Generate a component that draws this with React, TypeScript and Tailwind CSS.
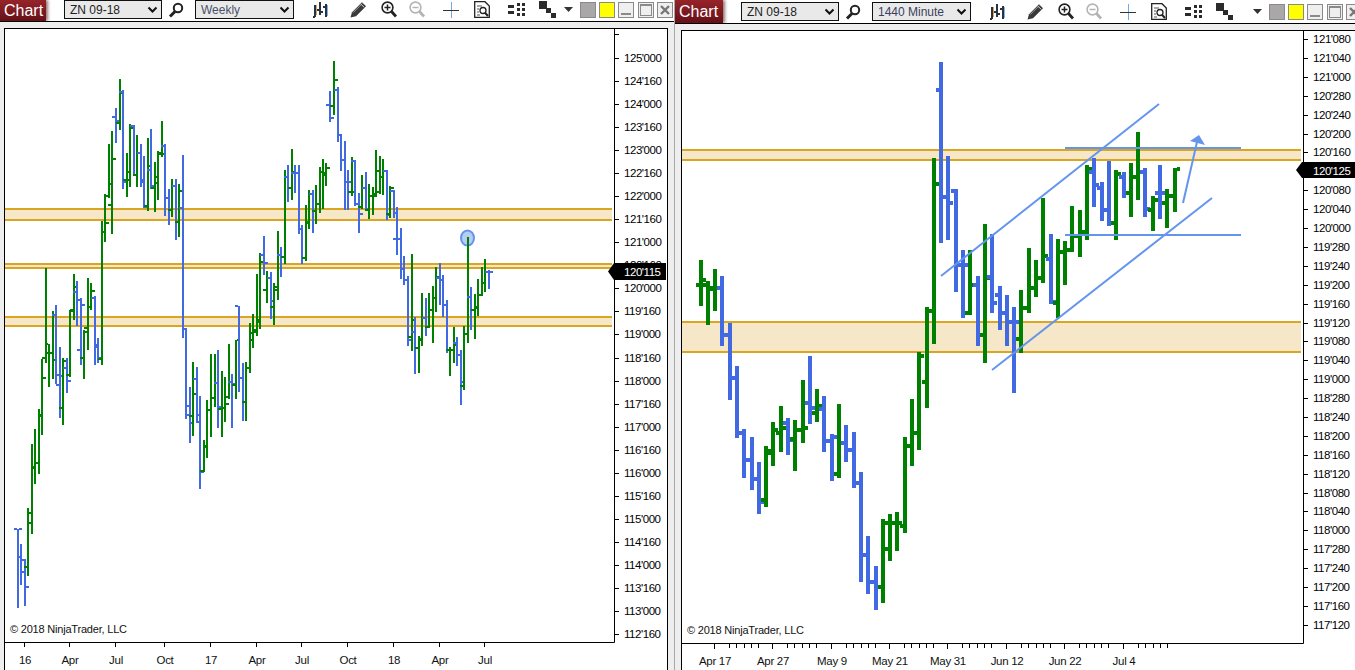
import React from "react"

type Bar = [string, number, number, number, number, number]

const GREEN = "#008000"
const BLUE = "#4169e1"
const GOLD = "#daa520"
const BAND = "#f6e7c9"
const LINE = "#6495ed"

// color, x, high, low, open (left tick), close (right tick)
const weekly: Bar[] = [
  ["b",18,529,608,529,529],["b",21,544,585,557,560],["b",25,559,606,572,587],["g",28,508,576,567,513],
  ["g",32,444,534,523,467],["g",35,429,484,468,463],["g",39,409,474,463,415],["g",42,359,435,416,378],
  ["g",46,268,363,358,353],["g",49,344,387,344,353],["g",53,311,379,353,360],["b",56,305,384,315,375],
  ["b",60,347,418,385,376],["g",63,358,425,408,361],["b",67,358,393,368,381],["g",70,310,377,375,311],
  ["g",74,274,320,310,287],["b",77,281,326,292,300],["b",81,298,365,350,305],["g",84,330,379,358,332],
  ["g",88,278,350,328,307],["g",91,283,310,307,291],["b",95,296,365,298,347],["b",98,338,363,345,358],
  ["g",102,221,365,359,232],["g",105,194,242,232,223],["g",109,144,198,196,184],["g",112,131,234,205,159],
  ["b",116,108,143,117,121],["g",120,79,130,123,93],["b",123,90,189,92,182],["g",127,153,197,180,172],
  ["g",130,124,187,180,128],["b",134,125,176,126,175],["g",137,135,187,175,153],["b",141,144,187,153,180],
  ["b",144,156,208,182,207],["g",148,138,211,206,166],["b",151,129,189,170,186],["g",155,162,212,188,177],
  ["g",158,151,200,183,153],["g",162,121,157,154,154],["b",165,144,216,146,198],["b",169,189,225,198,210],
  ["g",172,179,217,210,186],["b",176,179,240,186,222],["g",179,184,237,222,191],["b",183,155,338,208,329],
  ["b",186,329,419,329,415],["b",190,387,443,406,423],["g",193,362,436,416,394],["b",197,367,422,379,415],
  ["b",200,396,489,422,472],["g",204,440,472,471,446],["g",207,400,458,447,410],["g",211,354,437,410,398],
  ["g",215,354,407,398,383],["b",218,350,428,383,407],["g",222,371,437,409,408],["g",225,377,422,408,404],
  ["g",229,344,399,397,382],["b",232,374,428,382,384],["g",236,340,399,385,340],["b",239,306,392,306,378],
  ["b",243,363,421,378,402],["g",246,362,421,402,368],["g",250,323,373,368,333],["g",253,314,348,340,330],
  ["g",257,274,336,332,320],["g",260,253,329,322,262],["b",264,236,275,255,263],["g",267,271,303,290,278],
  ["b",271,272,319,278,301],["g",274,283,325,307,290],["g",278,231,300,287,255],["b",281,247,277,255,257],
  ["g",285,170,264,257,177],["b",288,165,202,177,188],["g",292,149,200,188,172],["b",295,165,193,173,173],
  ["b",299,165,234,173,229],["b",302,225,264,229,258],["g",306,205,261,258,222],["g",309,190,229,223,194],
  ["b",313,190,233,194,211],["g",316,185,224,211,204],["g",320,167,213,204,172],["g",323,159,209,172,173],
  ["g",326,163,186,175,168],["b",330,91,122,105,118],["g",334,61,115,106,80],["b",338,87,142,90,135],
  ["b",341,135,171,135,160],["b",345,141,210,160,182],["b",348,170,210,182,182],["g",352,157,196,192,192],
  ["b",355,160,206,161,204],["b",359,193,233,204,214],["g",362,175,209,207,188],["b",366,172,211,188,209],
  ["g",369,184,219,210,196],["g",373,187,215,196,196],["g",376,150,195,194,171],["g",380,156,194,192,177],
  ["g",383,159,195,177,171],["b",387,170,220,171,215],["g",390,186,218,214,188],["b",394,190,218,191,213],
  ["b",397,207,255,239,239],["b",401,228,279,239,269],["b",404,256,285,269,280],["b",408,276,346,280,340],
  ["g",412,254,351,337,320],["b",415,317,374,332,348],["g",419,336,373,348,339],["g",422,293,346,340,318],
  ["b",426,298,336,318,327],["g",429,293,328,327,310],["g",433,286,343,310,298],["g",436,267,312,298,277],
  ["b",440,263,305,278,280],["b",443,275,317,280,305],["b",447,300,353,305,350],["g",450,347,376,350,350],
  ["g",454,327,363,350,345],["b",457,337,366,343,355],["b",461,350,405,355,382],["g",464,326,390,386,334],
  ["g",468,237,343,334,297],["b",471,287,330,297,310],["g",475,294,339,310,308],["g",478,279,316,307,295],
  ["g",482,267,296,295,283],["g",485,259,292,283,272],["b",489,270,289,272,272],
]

const minute: Bar[] = [
  ["g",701,260,306,285,280],["g",708,281,325,285,288],["g",715,269,311,289,288],["b",722,276,346,288,335],
  ["b",730,323,400,335,378],["b",737,366,438,378,433],["b",744,429,478,433,460],["b",752,437,490,460,479],
  ["b",759,462,514,479,502],["g",766,446,507,500,451],["g",773,422,466,453,430],["g",781,406,452,433,428],
  ["b",788,418,455,423,440],["g",795,420,471,439,430],["g",803,380,443,430,428],["b",810,356,424,403,408],
  ["g",817,389,422,413,406],["b",824,396,452,409,441],["b",832,434,481,441,437],["g",839,404,478,474,443],
  ["b",846,425,462,443,450],["b",854,432,488,450,483],["b",861,472,582,483,555],["b",868,536,594,555,582],
  ["b",876,566,610,582,587],["g",883,519,603,587,523],["g",890,514,561,549,523],["g",897,512,551,523,523],
  ["g",905,437,533,526,446],["g",912,399,466,446,433],["g",919,352,450,433,356],["g",927,307,408,382,311],
  ["g",934,158,344,311,184],["b",941,62,243,90,197],["b",948,156,240,197,203],["b",956,189,292,191,265],
  ["b",963,250,318,265,265],["g",970,250,315,313,285],["b",978,276,346,285,335],["g",985,224,363,335,278],
  ["b",992,234,313,277,303],["b",1000,286,330,295,313],["b",1007,295,346,313,322],["b",1014,307,393,322,322],
  ["g",1021,290,353,339,308],["g",1029,248,313,308,288],["g",1036,260,297,288,278],["g",1043,198,283,278,256],
  ["b",1051,234,304,259,302],["g",1058,239,318,303,252],["g",1065,241,285,252,250],["g",1072,206,252,250,236],
  ["g",1080,210,257,236,232],["g",1087,165,240,232,169],["b",1094,158,207,172,185],["b",1102,182,221,188,210],
  ["b",1109,161,226,210,223],["g",1116,170,240,223,174],["b",1124,172,198,177,193],["g",1131,163,217,193,177],
  ["g",1138,132,200,177,172],["b",1145,168,217,172,209],["g",1153,196,231,210,200],["b",1160,165,219,193,193],
  ["g",1167,189,228,203,196],["g",1175,168,212,196,169],
]

const weeklyPrices = ["125'000","124'160","124'000","123'160","123'000","122'160","122'000","121'160","121'000","120'160","120'000","119'160","119'000","118'160","118'000","117'160","117'000","116'160","116'000","115'160","115'000","114'160","114'000","113'160","113'000","112'160"]
const minutePrices = ["121'080","121'040","121'000","120'280","120'240","120'200","120'160","120'120","120'080","120'040","120'000","119'280","119'240","119'200","119'160","119'120","119'080","119'040","119'000","118'280","118'240","118'200","118'160","118'120","118'080","118'040","118'000","117'280","117'240","117'200","117'160","117'120"]

const weeklyDates: [string, number, number][] = [["16",25,24],["Apr",70,69],["Jul",116,115],["Oct",165,164],["17",211,210],["Apr",257,256],["Jul",302,301],["Oct",348,347],["18",394,393],["Apr",440,439],["Jul",485,484]]
const minuteDates: [string, number, number][] = [["Apr 17",715,714],["Apr 27",773,772],["May 9",832,831],["May 21",890,889],["May 31",948,947],["Jun 12",1007,1006],["Jun 22",1065,1064],["Jul 4",1124,1123]]
const minorOffsets = [15, 22, 30, 37, 44]

function Bars({ data, w, tick }: { data: Bar[]; w: number; tick: number }) {
  return (
    <>
      {data.map(([c, x, hi, lo, open, close], i) => {
        const fill = c === "g" ? GREEN : BLUE
        const left = x - w / 2
        return (
          <g key={i} fill={fill}>
            <rect x={left} y={hi} width={w} height={lo - hi} />
            <rect x={left - tick} y={open - w / 2} width={tick} height={w} />
            <rect x={left + w} y={close - w / 2} width={tick} height={w} />
          </g>
        )
      })}
    </>
  )
}

function Zone({ x1, x2, top, bottom }: { x1: number; x2: number; top: number; bottom: number }) {
  return (
    <>
      <rect x={x1} y={top} width={x2 - x1} height={bottom - top} fill={BAND} />
      <rect x={x1} y={top - 1} width={x2 - x1} height={2} fill={GOLD} />
      <rect x={x1} y={bottom - 1} width={x2 - x1} height={2} fill={GOLD} />
    </>
  )
}

function WeeklyChart() {
  return (
    <svg width={662} height={641} viewBox="5 29 662 641" className="block">
      <Zone x1={5} x2={612} top={209} bottom={220} />
      <Zone x1={5} x2={612} top={264} bottom={268} />
      <Zone x1={5} x2={612} top={317} bottom={326} />
      <ellipse cx={467.5} cy={238} rx={6.5} ry={7.5} fill="#b7cdf3" stroke={LINE} strokeWidth={2} />
      <Bars data={weekly} w={2} tick={3} />
      <path d="M614.5 28V642.5H5" fill="none" stroke="#000" />
      <path d="M614 34.5h5" stroke="#000" />
      {weeklyPrices.map((p, i) => {
        const y = 58 + i * 23.04
        return (
          <g key={p}>
            <path d={`M614 ${Math.round(y) + 0.5}h5`} stroke="#000" />
            <text x={624} y={Math.round(y) + 4} fill="#000" className="text-[11.5px] tracking-[-0.45px]">{p}</text>
          </g>
        )
      })}
      <polygon points="608,271.5 614,263 666,263 666,280 614,280" fill="#000" />
      <text x={624} y={276} fill="#fff" className="text-[11.5px] tracking-[-0.45px]">120'115</text>
      <text x={10} y={633} fill="#111" className="text-[11px] tracking-[-0.2px]">© 2018 NinjaTrader, LLC</text>
      {weeklyDates.map(([label, x, t]) => (
        <g key={label + x}>
          <path d={`M${t + 0.5} 642v5`} stroke="#000" />
          <text x={x} y={664} textAnchor="middle" fill="#111" className="text-[11.5px] tracking-[-0.3px]">{label}</text>
        </g>
      ))}
    </svg>
  )
}

function MinuteChart() {
  return (
    <svg width={673} height={639} viewBox="682 31 673 639" className="block">
      <Zone x1={682} x2={1301} top={150} bottom={160} />
      <Zone x1={682} x2={1301} top={322} bottom={352} />
      <Bars data={minute} w={4} tick={3} />
      <g stroke={LINE} fill="none" strokeWidth={2}>
        <path d="M941 276L1159 104" />
        <path d="M992 370L1212 198" />
        <path d="M1065 148H1241" />
        <path d="M1065 235H1241" />
        <path d="M1183 203L1197 142" />
      </g>
      <polygon points="1190,141 1199,135 1205,145" fill={LINE} />
      <path d="M1303.5 30V643.5H682" fill="none" stroke="#000" />
      {minutePrices.map((p, i) => {
        const y = Math.round(39 + i * 18.9)
        return (
          <g key={p}>
            <path d={`M1303 ${y + 0.5}h5`} stroke="#000" />
            <text x={1313} y={y + 4} fill="#000" className="text-[11.5px] tracking-[-0.45px]">{p}</text>
          </g>
        )
      })}
      <polygon points="1296,170 1302,162 1355,162 1355,178 1302,178" fill="#000" />
      <text x={1313} y={175} fill="#fff" className="text-[11.5px] tracking-[-0.45px]">120'125</text>
      <text x={687} y={634} fill="#111" className="text-[11px] tracking-[-0.2px]">© 2018 NinjaTrader, LLC</text>
      {minuteDates.map(([label, x, t]) => (
        <g key={label}>
          <path d={`M${t + 0.5} 643v6`} stroke="#000" />
          {minorOffsets.map((o) => (
            <path key={o} d={`M${t + o + 0.5} 643v5`} stroke="#000" />
          ))}
          <text x={x} y={665} textAnchor="middle" fill="#111" className="text-[11.5px] tracking-[-0.3px]">{label}</text>
        </g>
      ))}
    </svg>
  )
}

function Select({ label, textClass, w }: { label: string; textClass: string; w: string }) {
  return (
    <div className={`flex h-[19px] items-center justify-between border border-[#111] bg-[#e9e9e9] pl-[5px] pr-[3px] text-[12px] ${textClass} ${w}`}>
      <span>{label}</span>
      <svg width={11} height={8} viewBox="0 0 11 8">
        <path d="M1.5 1.5L5.5 5.5L9.5 1.5" fill="none" stroke="#111" strokeWidth={2} />
      </svg>
    </div>
  )
}

function SearchIcon() {
  return (
    <svg width={16} height={16} viewBox="0 0 16 16" className="ml-[6px]">
      <circle cx={10} cy={6} r={4.2} fill="none" stroke="#222" strokeWidth={2} />
      <path d="M7 9.5L2 14.5" stroke="#222" strokeWidth={3} />
    </svg>
  )
}

function BarsIcon() {
  return (
    <svg width={15} height={16} viewBox="0 0 15 16" className="ml-[19px]">
      <g fill="#2a3340">
        <rect x={1} y={3} width={2} height={12} />
        <rect x={0} y={14} width={2} height={2} />
        <rect x={6} y={0} width={2} height={13} />
        <rect x={4} y={7} width={2} height={2} />
        <rect x={8} y={9} width={2} height={2} />
        <rect x={12} y={2} width={2} height={13} />
        <rect x={10} y={4} width={2} height={2} />
      </g>
      <path d="M3.5 3v10" stroke="#d9a060" />
      <path d="M14.5 3v11" stroke="#7fb2e6" />
    </svg>
  )
}

function PencilIcon() {
  return (
    <svg width={17} height={17} viewBox="0 0 17 17" className="ml-[22px]">
      <path d="M0.5 16.5L2 11.2L12 1.2L16 5.2L6 15.2Z" fill="#3a3a3a" />
      <path d="M3.2 11.6L12.2 2.6" stroke="#9a9a9a" />
      <path d="M11 3.2L14.2 6.4" stroke="#ddd" />
    </svg>
  )
}

function ZoomIcon({ plus, color, ml }: { plus: boolean; color: string; ml: string }) {
  return (
    <svg width={16} height={17} viewBox="0 0 16 17" className={ml}>
      <circle cx={6.5} cy={6.5} r={5.4} fill="none" stroke={color} strokeWidth={1.6} />
      <path d={plus ? "M3.5 6.5h6M6.5 3.5v6" : "M3.5 6.5h6"} stroke={color} strokeWidth={1.5} />
      <path d="M10.5 10.5L15 15.5" stroke={color} strokeWidth={2.8} />
    </svg>
  )
}

function CrossIcon() {
  return (
    <svg width={16} height={16} viewBox="0 0 16 16" className="ml-[18px]">
      <path d="M8.5 0v16" stroke="#74a9e0" />
      <path d="M0 8.5h16" stroke="#333" />
    </svg>
  )
}

function DocIcon() {
  return (
    <svg width={16} height={17} viewBox="0 0 16 17" className="ml-[15px]">
      <path d="M0.7 0.7H11L15.3 5V16.3H0.7Z" fill="#fff" stroke="#222" strokeWidth={1.3} />
      <path d="M3 5h5M3 8h2M3 11h2M3 14h3" stroke="#555" />
      <circle cx={9} cy={9.5} r={3} fill="#fff" stroke="#222" strokeWidth={1.3} />
      <path d="M11 11.8L14 15" stroke="#222" strokeWidth={2} />
    </svg>
  )
}

function DashIcon() {
  return (
    <svg width={17} height={15} viewBox="0 0 17 15" className="ml-[18px]" fill="#2b2b2b">
      <rect x={0} y={3} width={6} height={3} />
      <rect x={0} y={9} width={6} height={3} />
      <rect x={9} y={1} width={3} height={3} />
      <rect x={9} y={6} width={3} height={3} />
      <rect x={9} y={11} width={3} height={3} />
      <rect x={14} y={1} width={3} height={3} />
      <rect x={14} y={6} width={3} height={3} />
      <rect x={14} y={11} width={3} height={3} />
    </svg>
  )
}

function StackIcon() {
  return (
    <svg width={17} height={17} viewBox="0 0 17 17" className="ml-[14px]" fill="#2b2b2b">
      <rect x={0} y={0} width={8} height={8} />
      <rect x={7} y={7} width={5} height={5} />
      <rect x={12} y={12} width={5} height={5} />
    </svg>
  )
}

function CaptionButtons() {
  return (
    <>
      <div className="ml-[7px] h-[16px] w-[16px] border border-[#8a8a8a] bg-[#a9a7a7]" />
      <div className="ml-[3px] h-[16px] w-[16px] border border-[#8a8a8a] bg-[#ffff00]" />
      <div className="ml-[3px] flex h-[16px] w-[16px] items-end justify-center border border-[#8a8a8a] bg-[#efefef] pb-[2px]">
        <div className="h-[2px] w-[10px] bg-[#8a8a8a]" />
      </div>
      <div className="ml-[4px] h-[16px] w-[16px] border border-[#8a8a8a] bg-[#efefef] p-[1px]">
        <div className="h-full border border-t-[2px] border-[#8a8a8a]" />
      </div>
      <div className="ml-[3px] flex h-[16px] w-[16px] shrink-0 items-center justify-center border border-[#8a8a8a] bg-[#efefef]">
        <svg width={10} height={10} viewBox="0 0 10 10">
          <path d="M1 1L9 9M9 1L1 9" stroke="#777" strokeWidth={2.4} />
        </svg>
      </div>
    </>
  )
}

function Toolbar({ period, periodClass, buttonW, rowTop, menuGap, height }: { period: string; periodClass: string; buttonW: string; rowTop: string; menuGap: string; height: string }) {
  return (
    <div className={`flex shrink-0 items-start overflow-hidden border-b border-black bg-white ${height}`}>
      <div className={`flex h-full shrink-0 items-center bg-gradient-to-b from-[#96242a] to-[#661018] pl-[4px] text-[16px] text-white shadow-[2px_0_3px_rgba(60,0,0,0.55)] ${buttonW}`}>
        Chart
      </div>
      <div className={`flex h-[19px] shrink-0 items-center ${rowTop}`}>
        <div className="ml-[18px]">
          <Select label="ZN 09-18" textClass="text-[#222]" w="w-[98px]" />
        </div>
        <SearchIcon />
        <div className="ml-[11px]">
          <Select label={period} textClass={periodClass} w="w-[99px]" />
        </div>
        <BarsIcon />
        <PencilIcon />
        <ZoomIcon plus color="#222" ml="ml-[14px]" />
        <ZoomIcon plus={false} color="#b4b4b4" ml="ml-[12px]" />
        <CrossIcon />
        <DocIcon />
        <DashIcon />
        <StackIcon />
        <svg width={9} height={5} viewBox="0 0 9 5" className={menuGap}>
          <path d="M0 0H9L4.5 5Z" fill="#333" />
        </svg>
        <CaptionButtons />
      </div>
    </div>
  )
}

export default function App() {
  return (
    <div className="flex h-[670px] w-[1355px] overflow-hidden bg-white font-['Liberation_Sans',Arial,sans-serif]">
      <div className="flex w-[675px] shrink-0 flex-col border-r border-[#a8a8a8] bg-[#eeeeee]">
        <Toolbar period="Weekly" periodClass="text-[#4a5068]" buttonW="w-[46px]" rowTop="mt-0" menuGap="ml-[8px]" height="h-[22px]" />
        <div className="flex-1 pl-[4px] pr-[6px] pt-[6px]">
          <div className="h-full border-l border-r border-t border-black bg-white">
            <WeeklyChart />
          </div>
        </div>
      </div>
      <div className="flex w-[680px] shrink-0 flex-col bg-[#eeeeee]">
        <Toolbar period="1440 Minute" periodClass="text-[#3a3f60]" buttonW="w-[48px]" rowTop="mt-[2px]" menuGap="ml-[20px]" height="h-[24px]" />
        <div className="flex-1 pl-[6px] pt-[6px]">
          <div className="h-full border-l border-t border-black bg-white">
            <MinuteChart />
          </div>
        </div>
      </div>
    </div>
  )
}
